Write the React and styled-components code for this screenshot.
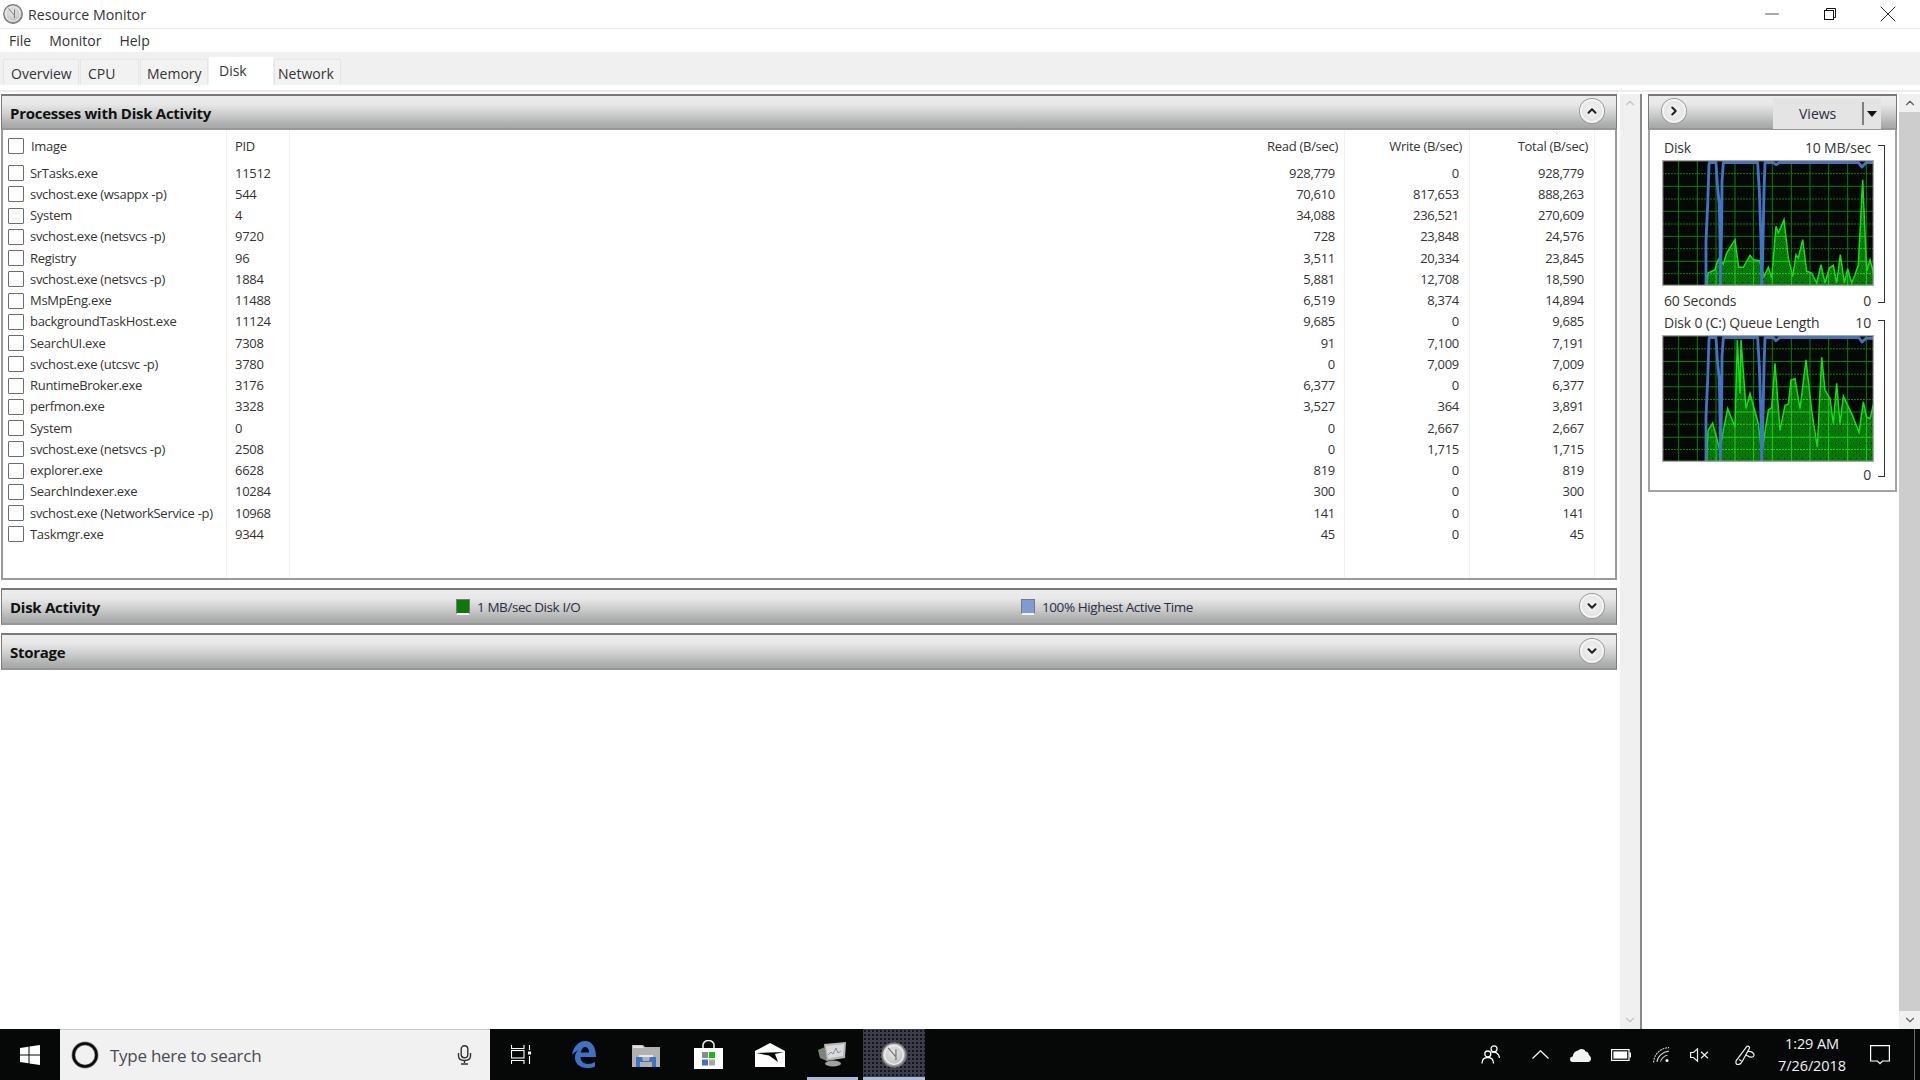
import React from "react";
import styled, { createGlobalStyle } from "styled-components";
import { ChevronUp, ChevronDown, ChevronRight, Minus, X } from "lucide-react";

const Global = createGlobalStyle`
  html, body { margin: 0; padding: 0; background: #fff; }
  * { box-sizing: border-box; }
  body { font-family: "Open Sans", "Liberation Sans", sans-serif; color: #2b2b2b; }
`;

const Window = styled.div`
  width: 1920px; height: 1080px; display: flex; flex-direction: column; overflow: hidden; background: #fff;
`;
const TitleBar = styled.div`
  height: 29px; display: flex; align-items: center; padding-left: 3px; border-bottom: 1px solid #eaeaea;
`;
const TitleText = styled.span`
  margin-left: 5px; font-size: 14.2px; color: #333;
`;
const WinControls = styled.div`
  margin-left: auto; display: flex; height: 100%; padding-right: 3px;
`;
const WinControl = styled.div`
  width: 58px; display: flex; align-items: center; justify-content: center; color: #111;
`;
const MenuBar = styled.div`
  height: 23px; display: flex; align-items: center; font-size: 14px; color: #333;
`;
const MenuItem = styled.span`
  margin-left: ${p => p.$ml}px;
`;
const TabStrip = styled.div`
  height: 33px; background: #f0f0f0; display: flex; align-items: flex-end; padding-left: 3px;
`;
const Tab = styled.div`
  width: ${p => p.$w}px;
  height: ${p => (p.$active ? 28 : 26)}px;
  padding-left: ${p => p.$pad}px;
  padding-top: ${p => (p.$active ? 3 : 4)}px;
  margin-right: 1px;
  font-size: 14px;
  line-height: 20px;
  background: ${p => (p.$active ? "#fff" : "#f2f2f2")};
  border: 1px solid ${p => (p.$active ? "#fff" : "#e6e6e6")};
  border-bottom: 0;
  color: #333;
`;
const TabRule = styled.div`
  height: 9px; background: #fff; position: relative;
  &::after { content: ""; display: block; margin-top: 5px; height: 2px; background: #ececec; position: absolute; left: 0; right: 0; top: 0; }
`;
const Workspace = styled.div`
  flex: 1; display: flex; min-height: 0;
`;
const MainColumn = styled.div`
  width: 1620px; padding: 0 3px 0 1px; display: flex; flex-direction: column; gap: 8px;
`;
const SectionHeader = styled.div`
  height: ${p => p.$h}px; display: flex; align-items: center; padding: 0 12px 0 8px;
  border: 1px solid #7d7876; border-top-width: 2px; border-bottom: 2px solid #979797;
  background: linear-gradient(#ececec 0%, #e8e8e8 25%, #cfcfcf 55%, #b0b2b2 85%, #a6a8a8 100%);
  flex: none;
`;
const SectionTitle = styled.div`
  font-size: 15px; font-weight: 700; color: #111; letter-spacing: -0.27px;
  width: ${p => p.$w || "auto"};
  margin-top: ${p => p.$mt || 0}px;
`;
const Legend = styled.div`
  display: flex; align-items: center; gap: 7px; font-size: 13.5px; color: #2a2d45; letter-spacing: -0.42px;
  width: ${p => p.$w}px;
`;
const Swatch = styled.span`
  width: 14px; height: 16px; background: ${p => p.$c}; border: 1px solid #777; border-bottom: 2px solid #f4f4f4; flex: none;
`;
const RoundButton = styled.div`
  margin-left: auto; width: 24px; height: 24px; border-radius: 50%; flex: none;
  display: flex; align-items: center; justify-content: center; color: #222;
  background: radial-gradient(circle at 50% 45%, #f4f4f4 0%, #e6e6e6 62%, #cfcfcf 100%);
  border: 2px solid #f3f3f3; box-shadow: 0 0 0 1px #9a9a9a;
  transform: translateY(-1px);
`;
const ProcessPanel = styled.div`
  height: 486px; display: flex; flex-direction: column;
`;
const TableBody = styled.div`
  flex: 1; display: flex; flex-direction: column; border: 2px solid #9a9a9a; border-top: 0; min-height: 0;
`;
const TableRow = styled.div`
  display: grid;
  grid-template-columns: 224px 63px 1055px 125px 125px 1fr;
  height: ${p => p.$h}px; font-size: 13px; line-height: ${p => p.$h}px; color: #333; letter-spacing: -0.29px;
  ${p => p.$fill && "flex: 1;"}
`;
const Cell = styled.div`
  white-space: nowrap; overflow: hidden;
  border-right: 1px solid #f0f0f0;
  text-align: ${p => (p.$right ? "right" : "left")};
  padding-right: ${p => p.$pr || 0}px;
  padding-left: ${p => p.$pl || 0}px;
`;
const ImageCell = styled(Cell)`
  display: flex; align-items: center; padding-left: 5px; gap: ${p => p.$gap}px;
`;
const LastCell = styled.div``;
const Check = styled.span`
  width: 16px; height: 16px; flex: none; border: 1.5px solid #6c6c6c; background: #fff; border-radius: 1px;
`;
const SortMark = styled.span`
  position: absolute; left: 50%; top: -1px; color: #b5b5b5; line-height: 0;
`;
const HeadLabel = styled.span`
  position: relative; display: inline-block;
`;
const Scrollbar = styled.div`
  width: ${p => p.$w}px; display: flex; flex-direction: column; background: #f0f0f0; flex: none;
`;
const ScrollArrow = styled.div`
  height: 18px; display: flex; align-items: center; justify-content: center;
  color: ${p => (p.$on ? "#606060" : "#c4c4c4")}; flex: none;
`;
const ScrollTrack = styled.div`
  flex: 1; background: ${p => (p.$on ? "#cdcdcd" : "#f0f0f0")};
`;
const Divider = styled.div`
  width: 2px; background: #8c8886; flex: none;
`;
const SidePane = styled.div`
  flex: 1; padding: 0 2px 0 6px; min-width: 0;
`;
const SidePanel = styled.div`
  height: 398px; display: flex; flex-direction: column;
`;
const SideBody = styled.div`
  flex: 1; border: 2px solid #a2a2a2; border-top: 0; padding: 8px 0 0 12px; display: flex; flex-direction: column; gap: 3px;
`;
const ArrowButton = styled(RoundButton)`
  margin-left: 5px; margin-right: 0;
`;
const ViewsButton = styled.div`
  margin-left: auto; margin-right: 3px; width: 108px; height: 31px; background: #e4e4e4;
  display: flex; align-items: center; font-size: 14px; color: #2a2d45; position: relative;
  padding-left: 26px; transform: translateY(1px);
`;
const ViewsSplit = styled.span`
  position: absolute; right: 17px; top: 4px; bottom: 4px; width: 2px; background: #7f7f7f;
`;
const ViewsCaret = styled.span`
  position: absolute; right: 4px; top: 13px; width: 0; height: 0;
  border-left: 5.5px solid transparent; border-right: 5.5px solid transparent; border-top: 6px solid #111;
`;
const GraphBlock = styled.div`
  display: flex; gap: 4px;
`;
const GraphColumn = styled.div`
  width: 212px;
`;
const GraphLabels = styled.div`
  height: 19px; display: flex; justify-content: space-between; padding: 0 3px 0 2px;
  font-size: 14px; line-height: 19px; color: #333; letter-spacing: -0.18px;
  margin-top: ${p => p.$mt || 0}px; margin-bottom: ${p => p.$mb || 0}px;
`;
const Bracket = styled.div`
  width: 7px; margin: 7px 0 7px; border: 1.5px solid #333; border-left: 0;
`;
const GraphFrame = styled.div`
  height: ${p => p.$h}px; line-height: 0;
  svg { display: block; width: 212px; height: 100%; }
`;
const Taskbar = styled.div`
  height: 51px; background: #050806; display: flex; flex: none; position: relative;
`;
const StartButton = styled.div`
  width: 60px; display: flex; align-items: center; justify-content: center;
`;
const SearchBox = styled.div`
  width: 430px; background: #f1f1f1; border-top: 1px solid #c8c8c8; display: flex; align-items: center;
  padding: 0 18px 0 11px;
`;
const SearchText = styled.span`
  margin-left: 11px; font-size: 17px; color: #4a4a55; letter-spacing: -0.27px; flex: 1;
`;
const TaskButton = styled.div`
  width: ${p => p.$w || 62}px; display: flex; align-items: center; justify-content: center; position: relative;
  margin-right: ${p => p.$mr || 0}px;
  background: ${p => (p.$active ? "#3d3d49" : "transparent")};
  ${p => p.$active && "background-image: radial-gradient(#11131a 0.7px, transparent 0.9px); background-size: 4px 4px;"}
  ${p => (p.$running || p.$active) && `
    &::after { content: ""; position: absolute; height: 3px; bottom: 0;
      left: ${p.$active ? 0 : 6}px; right: ${p.$active ? 0 : 5}px; background: #a6bde0; }
  `}
`;
const Tray = styled.div`
  margin-left: auto; display: flex; align-items: stretch;
`;
const TrayItem = styled.div`
  width: ${p => p.$w}px; margin-left: ${p => p.$ml || 0}px; display: flex; align-items: center; justify-content: center; color: #fff;
`;
const Clock = styled.div`
  width: 76px; margin-left: 9px; display: flex; flex-direction: column; align-items: center; justify-content: center;
  color: #f2f2f2; font-size: 14.5px; line-height: 22px; letter-spacing: -0.1px;
`;
const DesktopEdge = styled.div`
  width: 6px; margin-left: 5px; border-left: 1px solid #6a6a6a;
`;

const rows = [
  ["SrTasks.exe", "11512", "928,779", "0", "928,779"],
  ["svchost.exe (wsappx -p)", "544", "70,610", "817,653", "888,263"],
  ["System", "4", "34,088", "236,521", "270,609"],
  ["svchost.exe (netsvcs -p)", "9720", "728", "23,848", "24,576"],
  ["Registry", "96", "3,511", "20,334", "23,845"],
  ["svchost.exe (netsvcs -p)", "1884", "5,881", "12,708", "18,590"],
  ["MsMpEng.exe", "11488", "6,519", "8,374", "14,894"],
  ["backgroundTaskHost.exe", "11124", "9,685", "0", "9,685"],
  ["SearchUI.exe", "7308", "91", "7,100", "7,191"],
  ["svchost.exe (utcsvc -p)", "3780", "0", "7,009", "7,009"],
  ["RuntimeBroker.exe", "3176", "6,377", "0", "6,377"],
  ["perfmon.exe", "3328", "3,527", "364", "3,891"],
  ["System", "0", "0", "2,667", "2,667"],
  ["svchost.exe (netsvcs -p)", "2508", "0", "1,715", "1,715"],
  ["explorer.exe", "6628", "819", "0", "819"],
  ["SearchIndexer.exe", "10284", "300", "0", "300"],
  ["svchost.exe (NetworkService -p)", "10968", "141", "0", "141"],
  ["Taskmgr.exe", "9344", "45", "0", "45"],
];

const tabs = [
  ["Overview", 76, 7],
  ["CPU", 59, 7],
  ["Memory", 68, 6],
  ["Disk", 64, 9, true],
  ["Network", 67, 3],
];

const diskData = "140,384 144,345 165,335 172,310 178,300 190,318 200,285 225,245 236,328 250,328 270,292 280,305 298,308 312,355 325,328 335,360 348,205 355,225 372,185 385,300 398,355 408,290 415,300 428,245 440,340 455,345 470,375 483,320 495,375 508,330 520,322 530,375 541,290 553,375 563,332 575,375 585,350 595,320 608,65 620,340 630,305 642,350 642,384";
const queueData = "140,384 144,290 158,268 172,320 180,350 190,290 203,225 225,280 232,20 240,180 243,20 258,225 270,180 295,270 305,360 325,230 335,222 345,90 360,290 375,215 385,212 393,140 405,136 420,225 438,80 455,230 472,340 485,72 495,170 510,195 520,270 530,150 540,270 550,188 575,240 597,295 610,205 620,250 630,255 642,205 642,384";
const blueA = "138,384 138,250 143,140 147,20 148,14 168,14 172,80 178,140 180,250 181,384 185,200 186,70 190,14 293,14 298,100 303,250 305,384 308,300 312,100 315,14 340,14 348,20 358,14 595,14 606,27 618,14 642,14";
const blueB = "138,384 138,250 143,140 147,20 148,14 168,14 172,80 178,140 180,250 181,384 185,200 186,70 190,14 293,14 298,100 303,250 305,384 308,300 312,100 315,14 340,14 348,23 358,14 597,14 606,27 618,16 642,16";

const vLines = [56, 112, 168, 225, 281, 337, 394, 450, 506, 563, 619];
const hLines = [47, 85, 123, 160, 198, 235, 272, 310, 347];

function GridLines({ color, width }) {
  return (
    <g stroke={color} strokeWidth={width}>
      {vLines.map(x => <line key={x} x1={x} x2={x} y1="6" y2="384" />)}
      {hLines.map((y, i) => (
        <line key={y} x1="6" x2="642" y1={y} y2={y} strokeDasharray={i % 2 === 0 ? "6 3" : undefined} />
      ))}
    </g>
  );
}

function Graph({ id, data, blue, height }) {
  return (
    <GraphFrame $h={height}>
      <svg viewBox="6 6 636 378" preserveAspectRatio="none">
        <defs>
          <clipPath id={`${id}-clip`}><polygon points={data} /></clipPath>
          <pattern id={`${id}-dots`} width="18" height="18" patternUnits="userSpaceOnUse">
            <rect x="3" y="3" width="3" height="3" fill="#021" />
            <rect x="12" y="12" width="3" height="3" fill="#021" />
          </pattern>
        </defs>
        <rect x="6" y="6" width="636" height="378" fill="#050805" />
        <GridLines color="#0a7e0a" width="3" />
        <polygon points={data} fill="#057a05" />
        <polygon points={data} fill={`url(#${id}-dots)`} />
        <g clipPath={`url(#${id}-clip)`}><GridLines color="#1fd01f" width="3" /></g>
        <polygon points={data} fill="none" stroke="#14e014" strokeWidth="4.5" />
        <polyline points={blue} fill="none" stroke="#4472c4" strokeWidth="8.5" strokeLinejoin="round" />
        <rect x="7.5" y="7.5" width="633" height="375" fill="none" stroke="#a9a9a9" strokeWidth="5" />
      </svg>
    </GraphFrame>
  );
}

function AppIcon({ size }) {
  return (
    <svg width={size} height={size} viewBox="0 0 20 20">
      <defs>
        <radialGradient id={`disc${size}`} cx="45%" cy="40%" r="60%">
          <stop offset="0" stopColor="#e8e8e8" />
          <stop offset="0.7" stopColor="#c8c8c8" />
          <stop offset="1" stopColor="#8e8e8e" />
        </radialGradient>
      </defs>
      <circle cx="10" cy="10" r="9.3" fill={`url(#disc${size})`} stroke="#767676" strokeWidth="1.2" />
      <circle cx="10" cy="10" r="7.2" fill="none" stroke="#f0f0f0" strokeWidth="1.1" />
      <path d="M5.5 4.5 L11.5 11.5 V14 M11.5 11 V5.5" fill="none" stroke="#787878" strokeWidth="1" />
    </svg>
  );
}

const WinLogo = () => (
  <svg width="20" height="20" viewBox="0 0 20 20" fill="#fff">
    <polygon points="0,3 8.5,1.8 8.5,9.5 0,9.5" />
    <polygon points="9.5,1.6 20,0 20,9.5 9.5,9.5" />
    <polygon points="0,10.5 8.5,10.5 8.5,18.2 0,17" />
    <polygon points="9.5,10.5 20,10.5 20,20 9.5,18.4" />
  </svg>
);
const CortanaRing = () => (
  <svg width="28" height="28" viewBox="0 0 28 28">
    <circle cx="14" cy="14" r="11.5" fill="none" stroke="#8d8d8d" strokeWidth="4" />
    <circle cx="14" cy="14" r="11.5" fill="none" stroke="#0b0b0b" strokeWidth="2.6" />
  </svg>
);
const Mic = () => (
  <svg width="15" height="20" viewBox="0 0 15 20" fill="none" stroke="#333" strokeWidth="1.4">
    <rect x="4.2" y="0.8" width="6.6" height="12" rx="3.3" />
    <path d="M1.5 8 V11 C1.5 14 4 15.5 7.5 15.5 C11 15.5 13.5 14 13.5 11 V8" />
    <path d="M7.5 15.5 V18 M4 19 H11" />
  </svg>
);
const TaskView = () => (
  <svg width="20" height="19" viewBox="0 0 20 19" fill="none" stroke="#fff" strokeWidth="1.1">
    <path d="M.5 0V3.5H13V0" />
    <rect x=".5" y="5.5" width="12.5" height="7.5" />
    <path d="M.5 19V15.5H13V19" />
    <path d="M18.5 0V5M18.5 11V19" />
    <rect x="17" y="6.5" width="3" height="3" fill="#fff" stroke="none" />
  </svg>
);
const EdgeLogo = () => (
  <svg width="24" height="27" viewBox="0 0 24 27" fill="#3e72c8">
    <path fillRule="evenodd" d="M0 14 C1 6 7 0 13 0 C20 0 24 6 24 16 H8.5 C9 21 12 23 16 23 C18.5 23 21 22 23 21 V25.5 C20.5 26.8 18 27 15.5 27 C7.5 27 2.5 22 3 16 C3 13 4.5 10.5 7 9 C4 10 1.5 12 0 14 Z M8.8 11.5 H17 C17 7.5 15 6 13 6 C11 6 9.5 8 8.8 11.5 Z" />
  </svg>
);
const Explorer = () => (
  <svg width="28" height="24" viewBox="0 0 28 24">
    <path d="M0 2 H11 L13 4 H28 V24 H0 Z" fill="#b3b1b0" />
    <path d="M1 2.5 H10 L12 5 H1 Z" fill="#e4e2e0" />
    <path d="M4 14 H10 L11 18 H17 L18 14 H24 V24 H20 V19 H8 V24 H4 Z" fill="#3e72c8" />
    <rect x="7" y="12" width="14" height="2" fill="#e6e6e6" />
  </svg>
);
const Store = () => (
  <svg width="29" height="29" viewBox="0 0 29 29">
    <path d="M9 8 V5 A5.5 4.5 0 0 1 20 5 V8" fill="none" stroke="#e8e8e8" strokeWidth="1.6" />
    <rect x="0" y="8" width="29" height="21" fill="#fff" />
    <rect x="8" y="12" width="6" height="6" fill="#8a8a8a" />
    <rect x="15" y="12" width="6" height="6" fill="#18b818" />
    <rect x="8" y="19.5" width="6" height="6" fill="#3e72c8" />
    <rect x="15" y="19.5" width="6" height="6" fill="#a8a8a8" />
  </svg>
);
const Mail = () => (
  <svg width="30" height="24" viewBox="0 0 30 24">
    <polygon points="0,8 15,0 30,8 30,24 0,24" fill="#fff" />
    <polygon points="1,10 29,9 20,11 23,19 14,12.5" fill="#050806" />
  </svg>
);
const Perfmon = () => (
  <svg width="28" height="25" viewBox="0 0 28 25">
    <polygon points="6,2 28,0 27,16 8,19" fill="#b4b4b4" />
    <polygon points="8,4 26,2 25,14 10,16.5" fill="#d9d9d9" />
    <path d="M10 13 L13 10 L15 12 L18 6 L20 11 L23 9" fill="none" stroke="#7f8fa8" strokeWidth="1" />
    <polygon points="0,8 7,5 9,19 2,16" fill="#808080" />
    <ellipse cx="15" cy="21.5" rx="8" ry="3" fill="#a0a0a0" />
    <rect x="1.5" y="7.5" width="2" height="2" fill="#1fc01f" />
  </svg>
);
const People = () => (
  <svg width="19" height="19" viewBox="0 0 19 19" fill="none" stroke="#fff" strokeWidth="1.3">
    <circle cx="13" cy="3.8" r="3" />
    <circle cx="6.8" cy="9" r="3" />
    <path d="M1 18.5 C1 14.5 3.5 12.5 6.8 12.5 C10 12.5 12.5 14.5 12.5 18.5" />
    <path d="M10.5 7.2 C11.5 7 14.5 7 16 8.2 C17.5 9.3 18.3 11 18.5 13" />
  </svg>
);
const Caret = () => (
  <svg width="17" height="9" viewBox="0 0 17 9" fill="none" stroke="#fff" strokeWidth="1.2"><path d="M.5 8.5 L8.5 .8 L16.5 8.5" /></svg>
);
const Cloud = () => (
  <svg width="21" height="14" viewBox="0 0 21 14" fill="#f2f2f2">
    <path d="M2.5 14 C.5 14 0 12.5 0 11.3 C0 9.5 1.2 8.5 2.8 8.5 C3 5.5 5 3 8 2.6 C10 .5 14 .3 15.5 3.5 C17.5 3.5 18.7 5 19 7.3 C20.3 7.8 21 9.3 21 10.8 C21 12.8 19.8 14 18 14 Z" />
  </svg>
);
const Battery = () => (
  <svg width="20" height="12" viewBox="0 0 20 12">
    <rect x=".6" y=".6" width="17.4" height="10.8" fill="none" stroke="#fff" strokeWidth="1.2" />
    <rect x="2.4" y="2.4" width="13.8" height="7.2" fill="#fff" />
    <rect x="18.4" y="3.5" width="1.6" height="5" fill="#fff" />
  </svg>
);
const Wifi = () => (
  <svg width="17" height="16" viewBox="0 0 17 16" fill="none" stroke="#cfcfcf" strokeWidth="1.1">
    <path d="M.6 15.5 C.8 7.5 7.5 .8 16 .6" strokeDasharray="2 .8" />
    <path d="M4 15 C4.2 10 9.5 4.5 16 4.3" />
    <path d="M7.5 14.5 C8 12 11 8.5 14.5 8.3" />
    <circle cx="14" cy="13.5" r="1.5" fill="#fff" stroke="none" />
  </svg>
);
const Speaker = () => (
  <svg width="19" height="14" viewBox="0 0 19 14" fill="none" stroke="#eee" strokeWidth="1.2">
    <path d="M.6 4.5 H3.5 L7.5 .8 V13.2 L3.5 9.5 H.6 Z" />
    <path d="M11 3.7 L18 10.3 M18 3.7 L11 10.3" />
  </svg>
);
const Pen = () => (
  <svg width="20" height="20" viewBox="0 0 20 20" fill="none" stroke="#eee" strokeWidth="1.2">
    <path d="M2 19.4 C.5 18.5 .5 16 2 14.5 L11.5 1.8 C12.6 .5 15 1.5 14.4 3.2 L7.5 16 C6 18.7 3.5 20 2 19.4 Z" />
    <path d="M4 14.5 L6.5 16" />
    <path d="M13 6.5 C16 6 19.5 8 19 10.5 C18.6 12.5 15 12.5 13 11 L10.5 10" />
  </svg>
);
const Notify = () => (
  <svg width="20" height="20" viewBox="0 0 20 20" fill="none" stroke="#fff" strokeWidth="1.2">
    <path d="M.6 .6 H19.4 V16 H12.5 L10 18.6 L7.5 16 H.6 Z" />
  </svg>
);
const RestoreIcon = () => (
  <svg width="12" height="12" viewBox="0 0 12 12" fill="none" stroke="#111" strokeWidth="1">
    <rect x=".5" y="2.5" width="9" height="9" />
    <path d="M2.5 2.5 V.5 H11.5 V9.5 H9.5" />
  </svg>
);

function Section({ title, titleWidth, children }) {
  return (
    <SectionHeader $h={37}>
      <SectionTitle $w={titleWidth}>{title}</SectionTitle>
      {children}
      <RoundButton><ChevronDown size={14} strokeWidth={3.5} /></RoundButton>
    </SectionHeader>
  );
}

export default function App() {
  return (
    <Window>
      <Global />
      <TitleBar>
        <AppIcon size={20} />
        <TitleText>Resource Monitor</TitleText>
        <WinControls>
          <WinControl><Minus size={22} strokeWidth={0.8} /></WinControl>
          <WinControl><RestoreIcon /></WinControl>
          <WinControl><X size={28} strokeWidth={0.8} /></WinControl>
        </WinControls>
      </TitleBar>
      <MenuBar>
        <MenuItem $ml={9}>File</MenuItem>
        <MenuItem $ml={18}>Monitor</MenuItem>
        <MenuItem $ml={18}>Help</MenuItem>
      </MenuBar>
      <TabStrip>
        {tabs.map(([name, w, pad, active]) => (
          <Tab key={name} $w={w} $pad={pad} $active={active}>{name}</Tab>
        ))}
      </TabStrip>
      <TabRule />
      <Workspace>
        <MainColumn>
          <ProcessPanel>
            <SectionHeader $h={36}>
              <SectionTitle $mt={2}>Processes with Disk Activity</SectionTitle>
              <RoundButton><ChevronUp size={14} strokeWidth={3.5} /></RoundButton>
            </SectionHeader>
            <TableBody>
              <TableRow $h={32.5}>
                <ImageCell $gap={7}><Check />Image</ImageCell>
                <Cell $pl={8}>PID</Cell>
                <Cell $right $pr={6}>Read (B/sec)</Cell>
                <Cell $right $pr={7}>Write (B/sec)</Cell>
                <Cell $right $pr={6}>
                  <HeadLabel>
                    <SortMark><ChevronDown size={8} strokeWidth={1.5} /></SortMark>
                    Total (B/sec)
                  </HeadLabel>
                </Cell>
                <LastCell />
              </TableRow>
              {rows.map((r, i) => (
                <TableRow key={i} $h={21.25}>
                  <ImageCell $gap={6}><Check />{r[0]}</ImageCell>
                  <Cell $pl={8}>{r[1]}</Cell>
                  <Cell $right $pr={9}>{r[2]}</Cell>
                  <Cell $right $pr={10}>{r[3]}</Cell>
                  <Cell $right $pr={10}>{r[4]}</Cell>
                  <LastCell />
                </TableRow>
              ))}
              <TableRow $fill>
                <Cell /><Cell /><Cell /><Cell /><Cell /><LastCell />
              </TableRow>
            </TableBody>
          </ProcessPanel>
          <Section title="Disk Activity" titleWidth="446px">
            <Legend $w={565}><Swatch $c="#0a7a0a" />1 MB/sec Disk I/O</Legend>
            <Legend $w={300}><Swatch $c="#7f9bd0" />100% Highest Active Time</Legend>
          </Section>
          <Section title="Storage" />
        </MainColumn>
        <Scrollbar $w={20}>
          <ScrollArrow><ChevronUp size={14} strokeWidth={2} /></ScrollArrow>
          <ScrollTrack />
          <ScrollArrow><ChevronDown size={14} strokeWidth={2} /></ScrollArrow>
        </Scrollbar>
        <Divider />
        <SidePane>
          <SidePanel>
            <SectionHeader $h={36}>
              <ArrowButton><ChevronRight size={14} strokeWidth={3.5} /></ArrowButton>
              <ViewsButton>
                Views
                <ViewsSplit />
                <ViewsCaret />
              </ViewsButton>
            </SectionHeader>
            <SideBody>
              <GraphBlock>
                <GraphColumn>
                  <GraphLabels $mb={3}><span>Disk</span><span>10 MB/sec</span></GraphLabels>
                  <Graph id="disk" data={diskData} blue={blueA} height={126} />
                  <GraphLabels $mt={5}><span>60 Seconds</span><span>0</span></GraphLabels>
                </GraphColumn>
                <Bracket />
              </GraphBlock>
              <GraphBlock>
                <GraphColumn>
                  <GraphLabels $mb={3}><span>Disk 0 (C:) Queue Length</span><span>10</span></GraphLabels>
                  <Graph id="queue" data={queueData} blue={blueB} height={127} />
                  <GraphLabels $mt={3}><span></span><span>0</span></GraphLabels>
                </GraphColumn>
                <Bracket />
              </GraphBlock>
            </SideBody>
          </SidePanel>
        </SidePane>
        <Scrollbar $w={21}>
          <ScrollArrow $on><ChevronUp size={14} strokeWidth={2} /></ScrollArrow>
          <ScrollTrack $on />
          <ScrollArrow $on><ChevronDown size={14} strokeWidth={2} /></ScrollArrow>
        </Scrollbar>
      </Workspace>
      <Taskbar>
        <StartButton><WinLogo /></StartButton>
        <SearchBox>
          <CortanaRing />
          <SearchText>Type here to search</SearchText>
          <Mic />
        </SearchBox>
        <TaskButton $w={61} $mr={2}><TaskView /></TaskButton>
        <TaskButton><EdgeLogo /></TaskButton>
        <TaskButton><Explorer /></TaskButton>
        <TaskButton><Store /></TaskButton>
        <TaskButton><Mail /></TaskButton>
        <TaskButton $running><Perfmon /></TaskButton>
        <TaskButton $active><AppIcon size={26} /></TaskButton>
        <Tray>
          <TrayItem $w={45}><People /></TrayItem>
          <TrayItem $w={40} $ml={7}><Caret /></TrayItem>
          <TrayItem $w={40}><Cloud /></TrayItem>
          <TrayItem $w={41}><Battery /></TrayItem>
          <TrayItem $w={40}><Wifi /></TrayItem>
          <TrayItem $w={36}><Speaker /></TrayItem>
          <TrayItem $w={40} $ml={8}><Pen /></TrayItem>
          <Clock><span>1:29 AM</span><span>7/26/2018</span></Clock>
          <TrayItem $w={59}><Notify /></TrayItem>
          <DesktopEdge />
        </Tray>
      </Taskbar>
    </Window>
  );
}
